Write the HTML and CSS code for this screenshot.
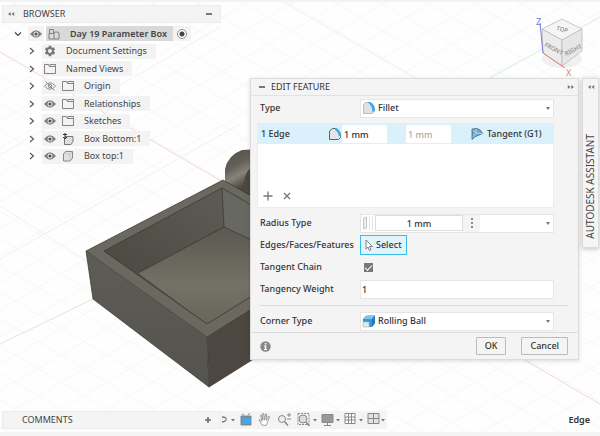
FILE: index.html
```html
<!DOCTYPE html>
<html lang="en">
<head>
	<meta charset="utf-8">
	<meta name="viewport" content="width=device-width, initial-scale=1">
	<title>Day 19 Parameter Box</title>
	<link rel="stylesheet" href="styles.css">
</head>
<body>
	<svg class="symbols" aria-hidden="true">
		<symbol id="chevron" viewBox="0 0 8 8"><path d="M2 1l3.500 3L2 7" fill="none" stroke="#555" stroke-width="1.1"/></symbol>
		<symbol id="chevron-down" viewBox="0 0 8 8"><path d="M1 2.500l3 3 3-3" fill="none" stroke="#444" stroke-width="1.200"/></symbol>
		<symbol id="eye" viewBox="0 0 12 10"><path d="M.5 5Q6-1.500 11.500 5Q6 11.500.5 5z" fill="#777" stroke="#777" stroke-width=".8"/><circle cx="6" cy="5" r="2.500" fill="#eee"/><circle cx="6" cy="5" r="1.600" fill="#555"/></symbol>
		<symbol id="eye-off" viewBox="0 0 12 10"><path d="M.5 5Q6-1.500 11.500 5Q6 11.500.5 5z" fill="none" stroke="#888" stroke-width=".9"/><circle cx="6" cy="5" r="1.800" fill="none" stroke="#888" stroke-width=".9"/><path d="M1.500.5l9 9" stroke="#888"/></symbol>
		<symbol id="folder" viewBox="0 0 12 10"><path d="M.5 9.500v-9h4l1 2h6v7zM5.500 2.500l.5-2h5.500v2" fill="none" stroke="#777" stroke-width=".9"/></symbol>
		<symbol id="gear" viewBox="0 0 12 12"><path d="M6 .8v10.400M1.500 3.400l9 5.200M1.500 8.600l9-5.200" stroke="#777" stroke-width="2.600"/><circle cx="6" cy="6" r="3" fill="#f3f3f3" stroke="#777" stroke-width="2"/></symbol>
		<symbol id="assembly" viewBox="0 0 12 12"><path d="M1.500 5.500V1.500h4v4M1 5.500h5v5.500H1zM6 11h5V5l-1-1H7L6 5.500" fill="none" stroke="#777" stroke-width=".9"/></symbol>
		<symbol id="body" viewBox="0 0 12 12"><path d="M1.500 4l2-2.500h7V8l-2.500 3H1.500z" fill="#e2e2e2" stroke="#888"/><path d="M2 4h6v6.500M8 4l2-2" fill="none" stroke="#bbb" stroke-width=".7"/></symbol>
		<symbol id="grounded" viewBox="0 0 12 12"><path d="M2.500 5.500l1-2h7.500v5l-2 3h-6.500z" fill="#ddd" stroke="#777"/><path d="M3 0v5.500M1 4l2 2 2-2M1 1.500h4" fill="none" stroke="#333"/></symbol>
		<symbol id="fillet" viewBox="0 0 14 14"><path d="M1.500 3.500L4 1.500h3q6 2 5.500 8.500l-2 2.500h-9z" fill="#dfe2e4" stroke="#a9afb3" stroke-width=".8"/><path d="M5.500 1H8q5 2 5 9l-2.500 1Q10.500 5 5.500 1z" fill="#3da9e5"/></symbol>
		<symbol id="fillet-line" viewBox="0 0 14 14"><path d="M1.500 4l3-2.500h3q5 2 5 8v1l-2 2h-9z" fill="#e2e5e7" stroke="#59636a"/><path d="M7.500 2q4 2 4.500 7" fill="none" stroke="#3da9e5" stroke-width="2.500"/></symbol>
		<symbol id="tangent" viewBox="0 0 12 12"><path d="M1 1l5-.5q4 1 5.500 5L7 7.500Q4 8 1 11.500z" fill="#6fa8cf" stroke="#446a86" stroke-width=".8"/><path d="M2 2l3 3-3 4M5 5l6 .5M5 1v4" fill="none" stroke="#c3e1f3" stroke-width=".8"/></symbol>
		<symbol id="rolling" viewBox="0 0 14 14"><path d="M1 5q2-3.500 5-3.500h7V9l-3 4H7V8H1z" fill="#3799d7"/><path d="M1 5q2-3.500 5-3.500h7L10 5z" fill="#7cc5f0"/><path d="M1 8h6v5H1z" fill="#e4e8ea" stroke="#aab5bc" stroke-width=".6"/><path d="M10 5v8l3-4V1.500z" fill="#1f7cba"/></symbol>
		<symbol id="collapse" viewBox="0 0 8 6"><path d="M3.700 1v4L1 3zM7.200 1v4L4.500 3z" fill="#777"/></symbol>
	</svg>

	<main class="canvas">
		<svg class="scene" viewBox="0 0 600 436" preserveAspectRatio="xMinYMin slice" aria-hidden="true">
			<defs>
				<linearGradient id="outside" x1="0" y1="0" x2="0" y2="1"><stop offset="0" stop-color="#5e5c56"/><stop offset="1" stop-color="#55534d"/></linearGradient>
				<linearGradient id="wall" x1="0" y1="1" x2="1" y2="0"><stop offset="0" stop-color="#46423c"/><stop offset="1" stop-color="#625f58"/></linearGradient>
				<linearGradient id="floor" x1="0" y1="0" x2="0" y2="1"><stop offset="0" stop-color="#5b5850"/><stop offset=".6" stop-color="#747166"/><stop offset="1" stop-color="#68655b"/></linearGradient>
				<linearGradient id="hinge" x1=".3" y1="0" x2=".7" y2="1"><stop offset="0" stop-color="#55524c"/><stop offset=".3" stop-color="#65615a"/><stop offset=".5" stop-color="#88837a"/><stop offset=".75" stop-color="#4a4741"/></linearGradient>
				<pattern id="grid" width="92" height="54" patternUnits="userSpaceOnUse" patternTransform="translate(15 4)"><path d="M0 0l92 54M0 54L92 0M46 0l46 27M0 27l46 27M0 27L46 0M46 54l46-27" fill="none" stroke="#f7f7f7"/></pattern>
			</defs>
			<path d="M0 0h600v436H0z" fill="url(#grid)"/>
			<path d="M0 259L240 124M0 206l190 120M0 155L220 27M280 0l320 185" stroke="#f0f0f0" fill="none"/>
			<path d="M0 52l223 130M523 359l77 45" stroke="#f4d3d3" fill="none"/>
			<path d="M0 344l93-45M490 78L600 17" stroke="#d3eed4" fill="none"/>
			<path d="M225 181v-12q3-14 17-19l18-1v48l-22-1z" fill="url(#hinge)"/>
			<path d="M243 194q-1-19 9-28l8-4v38z" fill="#4b4842"/>
			<path d="M86 251l137-71 37 21v104l-53 32z" fill="#6b685f"/>
			<path d="M104 251l118-63 38 22v81l-53 33z" fill="url(#wall)"/>
			<path d="M222 188l38 22v34l-36-17z" fill="#686862"/>
			<path d="M138 273l86-46 36 17v47l-53 33z" fill="url(#floor)"/>
			<path d="M86 251l121 86 2 50-116-88z" fill="url(#outside)"/>
			<path d="M207 337l53-33v51l-51 32z" fill="#4c4741"/>
			<path d="M86 251l137-71 37 21M104 251l118-63 38 22M104 251l103 73 53-33M86 251l121 86 53-33M207 337l2 50M86 251l7 48 116 88 51-32M222 188l2 39 36 17M138 273l86-46" fill="none" stroke="#35332f" stroke-width=".7"/>
		</svg>

		<section class="browser">
			<header class="panel-head">
				<svg width="8" height="6"><use href="#collapse"/></svg>
				<h2>BROWSER</h2>
				<button class="minus" aria-label="Minimize"></button>
			</header>
			<ul class="tree">
				<li class="root">
					<svg class="arrow" width="8" height="8"><use href="#chevron-down"/></svg>
					<span class="tag eye-tag"><svg width="12" height="10"><use href="#eye"/></svg></span>
					<span class="tag current"><svg width="12" height="12"><use href="#assembly"/></svg><b>Day 19 Parameter Box</b></span>
					<label class="activate"><input type="radio" name="active" aria-label="Activate" checked></label>
				</li>
				<li>
					<svg class="arrow" width="8" height="8"><use href="#chevron"/></svg>
					<span class="tag"><svg width="12" height="12"><use href="#gear"/></svg>Document Settings</span>
				</li>
				<li>
					<svg class="arrow" width="8" height="8"><use href="#chevron"/></svg>
					<span class="tag"><svg width="12" height="10"><use href="#folder"/></svg>Named Views</span>
				</li>
				<li>
					<svg class="arrow" width="8" height="8"><use href="#chevron"/></svg>
					<span class="tag"><svg width="12" height="10"><use href="#eye-off"/></svg><svg width="12" height="10"><use href="#folder"/></svg>Origin</span>
				</li>
				<li>
					<svg class="arrow" width="8" height="8"><use href="#chevron"/></svg>
					<span class="tag"><svg width="12" height="10"><use href="#eye"/></svg><svg width="12" height="10"><use href="#folder"/></svg>Relationships</span>
				</li>
				<li>
					<svg class="arrow" width="8" height="8"><use href="#chevron"/></svg>
					<span class="tag"><svg width="12" height="10"><use href="#eye"/></svg><svg width="12" height="10"><use href="#folder"/></svg>Sketches</span>
				</li>
				<li>
					<svg class="arrow" width="8" height="8"><use href="#chevron"/></svg>
					<span class="tag"><svg width="12" height="10"><use href="#eye"/></svg><svg width="12" height="12"><use href="#grounded"/></svg>Box Bottom:1</span>
				</li>
				<li>
					<svg class="arrow" width="8" height="8"><use href="#chevron"/></svg>
					<span class="tag"><svg width="12" height="10"><use href="#eye"/></svg><svg width="12" height="12"><use href="#body"/></svg>Box top:1</span>
				</li>
			</ul>
		</section>

		<svg class="viewcube" width="60" height="76" viewBox="0 0 60 76">
			<ellipse cx="22" cy="56" rx="20" ry="9" fill="#f0f0f0"/>
			<path d="M2 26l20-10 20 10-20 11z" fill="#f5f5f5" stroke="#bbb" stroke-width=".8"/>
			<path d="M2 26l20 11v26L3 50z" fill="#ececec" stroke="#bbb" stroke-width=".8"/>
			<path d="M42 26L22 37v26l20-15z" fill="#e6e6e6" stroke="#bbb" stroke-width=".8"/>
			<path d="M0 20l3 30" stroke="#7777dc"/>
			<path d="M3 50l22 15" stroke="#e17c7c"/>
			<text class="axis-x" x="26" y="73">X</text>
			<text class="face" transform="translate(16 27) rotate(15)">TOP</text>
			<text class="face" transform="translate(4 43) rotate(28)">FRONT</text>
			<text class="face" transform="translate(26 53) rotate(-27)">RIGHT</text>
			<text class="axis-z" x="-4" y="22">Z</text>
		</svg>

		<form class="dialog">
			<header class="dialog-head">
				<button type="button" class="minus" aria-label="Collapse"></button>
				<h2>EDIT FEATURE</h2>
				<svg class="flip" width="8" height="6"><use href="#collapse"/></svg>
			</header>
			<div class="fields">
				<div class="field">
					<label for="type">Type</label>
					<div class="picker"><svg width="14" height="14"><use href="#fillet"/></svg><select id="type"><option>Fillet</option></select></div>
				</div>
				<div class="list">
					<div class="edge">
						<label for="radius">1 Edge</label>
						<svg width="14" height="14"><use href="#fillet-line"/></svg>
						<input id="radius" type="text" value="1 mm">
						<input class="dim" type="text" value="1 mm" aria-label="Second radius" disabled>
						<svg class="tangent" width="12" height="12"><use href="#tangent"/></svg>
						<span>Tangent (G1)</span>
					</div>
					<div class="list-tools">
						<button type="button" aria-label="Add"><svg width="10" height="10"><path d="M5 .5v9M.5 5h9" stroke="#777" stroke-width="1.300"/></svg></button>
						<button type="button" aria-label="Remove"><svg width="10" height="10"><path d="M2 2l6 6M8 2L2 8" stroke="#777" stroke-width="1.300"/></svg></button>
					</div>
				</div>
				<div class="field">
					<label for="rtype">Radius Type</label>
					<div class="radius">
						<svg width="14" height="16"><path d="M2.500 14V4q0-2 3-2v11z" fill="#eee" stroke="#bbb" stroke-width=".8"/><path d="M8.500 1v14M11.500 1v14" stroke="#e4e4e4"/></svg>
						<input type="text" value="1 mm" aria-label="Radius">
						<button type="button" class="dots" aria-label="More"><svg width="4" height="10"><path d="M1 0h2v2H1zM1 4h2v2H1zM1 8h2v2H1z" fill="#888"/></svg></button>
						<div class="picker"><select id="rtype"><option></option></select></div>
					</div>
				</div>
				<div class="field">
					<label for="pick">Edges/Faces/Features</label>
					<button type="button" class="select" id="pick"><svg width="8" height="12"><path d="M1 1v9l2-2 1.500 3.500 1.500-.8L4.500 7.500H7.300z" fill="#fff" stroke="#666" stroke-width=".8"/></svg>Select</button>
				</div>
				<div class="field">
					<label for="chain">Tangent Chain</label>
					<input type="checkbox" id="chain" checked>
				</div>
				<div class="field">
					<label for="weight">Tangency Weight</label>
					<input type="text" id="weight" value="1">
				</div>
				<div class="field corner">
					<label for="corner">Corner Type</label>
					<div class="picker"><svg width="14" height="14"><use href="#rolling"/></svg><select id="corner"><option>Rolling Ball</option></select></div>
				</div>
			</div>
			<footer>
				<svg width="11" height="11"><circle cx="5.500" cy="5.500" r="5.200" fill="#888"/><path d="M4.800 2h1.600v1.500H4.800zM4 4.500h2.300V8H7v1H4V8h.8V5.500H4z" fill="#fff"/></svg>
				<button type="button">OK</button>
				<button type="button">Cancel</button>
			</footer>
		</form>

		<aside class="assistant">
			<svg width="8" height="6"><use href="#collapse"/></svg>
			<h2>AUTODESK ASSISTANT</h2>
		</aside>

		<div class="bottom">
			<header class="panel-head comments">
				<h2>COMMENTS</h2>
				<button class="plus" aria-label="Add comment"><svg width="8" height="8"><path d="M4 1v6M1 4h6" stroke="#666" stroke-width="1.500"/></svg></button>
			</header>
			<nav class="tools">
				<svg width="166" height="18">
					<path d="M1 6q5 0 4 3-1 2-4 2" fill="none" stroke="#777" stroke-width="1.300"/>
					<path d="M10 8h4l-2 2.500zM92 8h4l-2 2.500zM115 8h4l-2 2.500zM138 8h4l-2 2.500zM160 8h4l-2 2.500z" fill="#777"/>
					<path d="M20 5h10v9H20zM21 4l2-1M27 4l2-2" fill="#888" stroke="#888"/>
					<path d="M21 7h9v6h-9z" fill="#45a7e8"/>
					<path d="M41 14l-3-5 1-.5 2 2-1.500-6 1-.3L42 9l-.5-6.500h1.200L43.500 9l1-6h1.100L45.200 9.500 47.500 5l1 .5-2 6-1.500 3z" fill="#fff" stroke="#888" stroke-width=".8"/>
					<circle cx="61" cy="8" r="3.500" fill="#ededed" stroke="#888"/><path d="M63.500 10.500l3.500 4" stroke="#888" stroke-width="1.500"/><path d="M66 4h4M68 2v4M66 8h4" stroke="#888"/>
					<path d="M77 2.500h11v11H77z" fill="none" stroke="#888" stroke-dasharray="2 1"/><circle cx="82" cy="8" r="4" fill="#ddd" stroke="#888"/><path d="M85 11l3.500 4" stroke="#888" stroke-width="1.500"/>
					<path d="M101 3.500h11v8h-11z" fill="#999" stroke="#888"/><path d="M106.500 12v2.500M103 14.500h7" stroke="#888"/>
					<path d="M124 2.500h10v10h-10zM127.500 2.500v10M130.500 2.500v10M124 6h10M124 9h10" fill="#fff" stroke="#888"/>
					<path d="M147 2.500h11v10h-11z" fill="#e2e2e2" stroke="#888"/><path d="M152.500 2.500v10M147 7.500h11" stroke="#888"/>
				</svg>
			</nav>
			<b class="status">Edge</b>
		</div>
	</main>
</body>
</html>
```
FILE: styles.css
```css
* {
	box-sizing: border-box;
}

body {
	margin: 0;
	font: 9px/14px "Noto Sans", "Open Sans", sans-serif;
	color: #444;
	background: #fefefe;
}

h2 {
	margin: 0;
	font-size: 9px;
	font-weight: 400;
}

b {
	font-weight: 600;
}

svg {
	display: block;
	flex: none;
}

button, input, select {
	font: inherit;
	color: inherit;
	margin: 0;
	padding: 0;
	border: 0;
	border-radius: 0;
	background: none;
}

.symbols {
	position: absolute;
	width: 0;
	height: 0;
}

.canvas {
	position: relative;
	height: 100vh;
	min-height: 400px;
	overflow: hidden;
	border-top: 2px solid #f3f3f3;
	border-bottom: 4px solid #f3f3f3;
}

.scene {
	position: absolute;
	top: -2px;
	left: 0;
	width: 100%;
	height: 100vh;
}

/* browser tree */

.browser {
	position: absolute;
	top: 3px;
	left: 2px;
	width: 219px;
}

.panel-head {
	display: flex;
	align-items: center;
	height: 18px;
	padding: 0 8px 0 4px;
	gap: 8px;
	background: #f4f4f4;
	border: 1px solid #ececec;
}

.panel-head button {
	margin-left: auto;
}

.minus {
	width: 6px;
	height: 2px;
	background: #777;
}

.tree {
	display: flex;
	flex-direction: column;
	height: 140px;
	margin: 2px 0 0;
	padding: 0 0 0 26px;
	list-style: none;
}

.tree li {
	flex: 1;
	display: flex;
	align-items: center;
	gap: 6px;
}

.tree .root {
	margin-left: -14px;
}

.tag {
	display: flex;
	align-items: center;
	gap: 6px;
	height: 15px;
	padding: 0 9px 0 2px;
	background: #f3f3f3;
	white-space: nowrap;
}

.tag svg:last-of-type {
	margin-right: 4px;
}

.root .eye-tag {
	padding: 0 2px;
}

.root .eye-tag svg {
	margin: 0;
}

.root .current {
	margin-left: -4px;
	padding: 0 6px 0 2px;
	background: #d9d9d9;
}

.activate {
	display: flex;
	align-items: center;
	height: 15px;
	margin-left: -6px;
	padding: 0 4px;
	background: #f3f3f3;
}

.activate input {
	appearance: none;
	width: 10px;
	height: 10px;
	border: 1px solid #8c8fa5;
	border-radius: 50%;
	background: radial-gradient(#444 0 2px, #fff 3px);
}

/* view cube */

.viewcube {
	position: absolute;
	top: 1px;
	right: 0;
	overflow: visible;
}

.face {
	font-size: 6px;
	font-weight: 500;
	fill: #888;
}

.axis-z, .axis-x {
	font-size: 9px;
	fill: #7777dc;
}

.axis-x {
	fill: #e17c7c;
}

/* dialog */

.dialog {
	position: absolute;
	top: 76px;
	right: 21px;
	width: 329px;
	background: #f4f4f4;
	border: 1px solid #ddd;
	box-shadow: 0 1px 4px rgba(0, 0, 0, .15);
	color: #333;
	font-weight: 500;
}

.dialog-head {
	display: flex;
	align-items: center;
	gap: 6px;
	height: 17px;
	padding: 0 3px 0 8px;
	border-bottom: 1px solid #e2e2e2;
}

.dialog-head svg {
	margin-left: auto;
}

.flip {
	transform: scaleX(-1);
}

.fields {
	display: flex;
	flex-direction: column;
	gap: 2px;
	padding: 2px 24px 0 9px;
}

.field {
	display: grid;
	grid-template-columns: 100px 1fr;
	align-items: center;
	height: 20px;
}

.field > input[type="text"], .picker {
	height: 19px;
	background: #fff;
	border: 1px solid #e6e6e6;
}

.field > input[type="text"] {
	padding-left: 1px;
}

.picker {
	position: relative;
	display: flex;
	align-items: center;
	gap: 2px;
	padding-left: 1px;
}

.picker select {
	flex: 1;
	min-width: 0;
	appearance: none;
}

.picker::after {
	content: "";
	position: absolute;
	right: 3px;
	border: 2px solid transparent;
	border-top: 3px solid #777;
	border-bottom: 0;
}

.list {
	display: flex;
	flex-direction: column;
	justify-content: space-between;
	height: 85px;
	margin: 3px 0 3px -3px;
	background: #fff;
	border: 1px solid #ececec;
}

.edge {
	display: flex;
	align-items: center;
	height: 20px;
	padding-left: 3px;
	background: #daf1fb;
}

.edge label {
	width: 67px;
}

.edge input {
	width: 45px;
	height: 18px;
	padding-left: 2px;
	background: #fff;
}

.edge .dim {
	margin-left: 19px;
	color: #aaa;
}

.tangent {
	margin: 0 4px 0 20px;
}

.list-tools {
	display: flex;
	gap: 9px;
	padding: 0 5px 6px;
}

.list-tools button, .dots {
	display: flex;
}

.radius {
	display: grid;
	grid-template-columns: 14px 88px 17px 1fr;
	align-items: center;
	justify-items: center;
	height: 19px;
	background: linear-gradient(90deg, #fff 101px, #f4f4f4 0);
	border: 1px solid #e6e6e6;
}

.radius input {
	justify-self: stretch;
	min-width: 0;
	width: 100%;
	height: 16px;
	border: 1px solid #ddd;
	text-align: center;
}

.radius .picker {
	justify-self: stretch;
	height: 17px;
	border: 0;
}

.select {
	display: flex;
	align-items: center;
	justify-self: start;
	gap: 3px;
	height: 20px;
	padding: 0 4px;
	background: #e1f4fb;
	border: 1px solid #38bfe8;
}

.field input[type="checkbox"] {
	appearance: none;
	width: 9px;
	height: 9px;
	margin-left: 4px;
	background: #777;
}

.field input[type="checkbox"]::after {
	content: "";
	display: block;
	width: 6px;
	height: 3px;
	margin: 2px 1px;
	border: solid #fff;
	border-width: 0 0 1px 1px;
	transform: rotate(-45deg);
}

.corner {
	height: 27px;
	margin: 4px -14px 0 0;
	padding: 4px 14px 0 0;
	border-top: 1px solid #ddd;
}

.dialog footer {
	display: flex;
	align-items: center;
	gap: 15px;
	height: 27px;
	padding: 0 10px 0 9px;
	border-top: 1px solid #ddd;
}

.dialog footer svg {
	margin-right: auto;
}

.dialog footer button {
	height: 18px;
	padding: 0 8px;
	border: 1px solid #bbb;
	border-radius: 1px;
}

/* assistant tab */

.assistant {
	position: absolute;
	top: 76px;
	right: 1px;
	display: flex;
	flex-direction: column;
	align-items: center;
	justify-content: space-between;
	width: 17px;
	height: 170px;
	padding: 5px 0 8px;
	background: #f5f5f5;
	border: 1px solid #ddd;
	box-shadow: 0 1px 5px rgba(0, 0, 0, .25);
}

.assistant h2 {
	writing-mode: vertical-rl;
	transform: rotate(180deg);
	font-size: 10px;
	line-height: 15px;
}

/* bottom bar */

.bottom {
	position: absolute;
	left: 2px;
	right: 10px;
	bottom: 3px;
	display: flex;
	align-items: center;
}

.comments {
	width: 219px;
	padding-left: 19px;
}

.plus {
	display: flex;
}

.tools {
	background: #f4f4f4;
}

.status {
	margin-left: auto;
	color: #333;
}
```
